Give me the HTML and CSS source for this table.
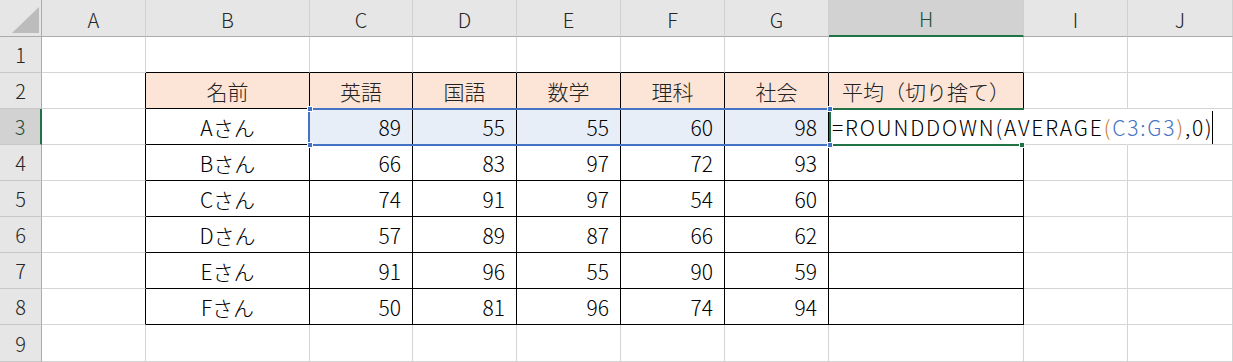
FILE: index.html
```html
<!DOCTYPE html>
<html lang="ja">
<head>
<meta charset="utf-8">
<title>Sheet</title>
<link rel="stylesheet" href="styles.css">
</head>
<body>
<div class="sheet">
  <div class="grid">
    <div class="corner"><svg width="42" height="37" viewBox="0 0 42 37"><polygon points="12,33 39,33 39,7" fill="#bcbcbc"/></svg></div>
    <div class="ch">A</div><div class="ch">B</div><div class="ch">C</div><div class="ch">D</div><div class="ch">E</div><div class="ch">F</div><div class="ch">G</div><div class="ch sel-h">H</div><div class="ch">I</div><div class="ch">J</div>

    <div class="rh">1</div>
    <div class="c"></div><div class="c above"></div><div class="c above"></div><div class="c above"></div><div class="c above"></div><div class="c above"></div><div class="c above"></div><div class="c above"></div><div class="c"></div><div class="c"></div>

    <div class="rh">2</div>
    <div class="c left"></div><div class="c t th">名前</div><div class="c t th">英語</div><div class="c t th">国語</div><div class="c t th">数学</div><div class="c t th">理科</div><div class="c t th">社会</div><div class="c t th">平均（切り捨て）</div><div class="c"></div><div class="c"></div>

    <div class="rh sel-r">3</div>
    <div class="c left"></div><div class="c t name">Aさん</div><div class="c t num hl">89</div><div class="c t num hl">55</div><div class="c t num hl">55</div><div class="c t num hl">60</div><div class="c t num hl">98</div><div class="c t edit"><span class="ftext">=ROUNDDOWN(AVERAGE<span class="paren">(</span><span class="ref">C3:G3</span><span class="paren">)</span>,0)</span></div><div class="c hide-r"></div><div class="c"></div>

    <div class="rh">4</div>
    <div class="c left"></div><div class="c t name">Bさん</div><div class="c t num">66</div><div class="c t num">83</div><div class="c t num">97</div><div class="c t num">72</div><div class="c t num">93</div><div class="c t"></div><div class="c"></div><div class="c"></div>

    <div class="rh">5</div>
    <div class="c left"></div><div class="c t name">Cさん</div><div class="c t num">74</div><div class="c t num">91</div><div class="c t num">97</div><div class="c t num">54</div><div class="c t num">60</div><div class="c t"></div><div class="c"></div><div class="c"></div>

    <div class="rh">6</div>
    <div class="c left"></div><div class="c t name">Dさん</div><div class="c t num">57</div><div class="c t num">89</div><div class="c t num">87</div><div class="c t num">66</div><div class="c t num">62</div><div class="c t"></div><div class="c"></div><div class="c"></div>

    <div class="rh">7</div>
    <div class="c left"></div><div class="c t name">Eさん</div><div class="c t num">91</div><div class="c t num">96</div><div class="c t num">55</div><div class="c t num">90</div><div class="c t num">59</div><div class="c t"></div><div class="c"></div><div class="c"></div>

    <div class="rh">8</div>
    <div class="c left"></div><div class="c t name">Fさん</div><div class="c t num">50</div><div class="c t num">81</div><div class="c t num">96</div><div class="c t num">74</div><div class="c t num">94</div><div class="c t"></div><div class="c"></div><div class="c"></div>

    <div class="rh">9</div>
    <div class="c"></div><div class="c"></div><div class="c"></div><div class="c"></div><div class="c"></div><div class="c"></div><div class="c"></div><div class="c"></div><div class="c"></div><div class="c"></div>
  </div>

  <div class="active-box"></div>
  <div class="fill-handle"></div>
  <div class="range-box">
    <span class="hd hd-tl"></span><span class="hd hd-tr"></span><span class="hd hd-bl"></span><span class="hd hd-br"></span>
  </div>
  <div class="caret"></div>
</div>
</body>
</html>
```

FILE: styles.css
```css
* { box-sizing: border-box; }
html, body { margin: 0; padding: 0; background: #fff; }
body { width: 1233px; height: 362px; overflow: hidden; }

.sheet {
  position: relative;
  width: 1233px;
  height: 362px;
  font-family: "Noto Sans CJK JP", "Noto Sans", sans-serif;
  font-weight: 300;
}

.grid {
  display: grid;
  grid-template-columns: 42px 104px 164px 103px 104px 104px 104px 104px 195px 104px 105px;
  grid-template-rows: 37px repeat(8, 36px) 37px;
}

.corner {
  background: #e6e6e6;
  border-right: 1px solid #ababab;
  border-bottom: 1px solid #ababab;
}
.corner svg { display: block; }

.ch {
  background: #e6e6e6;
  border-right: 1px solid #d0d0d0;
  border-bottom: 1px solid #ababab;
  display: flex;
  align-items: center;
  justify-content: center;
  font-size: 20px;
  color: #262626;
  padding-top: 2px;
}
.ch.sel-h {
  background: #d2d2d2;
  border-bottom: 2px solid #217346;
  color: #1f4e36;
}

.rh {
  background: #e6e6e6;
  border-right: 1px solid #ababab;
  border-bottom: 1px solid #c8c8c8;
  display: flex;
  align-items: center;
  justify-content: center;
  font-size: 20px;
  color: #262626;
}
.rh.sel-r {
  background: #d2d2d2;
  border-right: 2px solid #217346;
  color: #1f4e36;
}

.c {
  border-right: 1px solid #d4d4d4;
  border-bottom: 1px solid #d4d4d4;
  display: flex;
  align-items: center;
  font-size: 21px;
  color: #000;
  white-space: nowrap;
}
.c.above { border-bottom-color: #000; }
.c.left { border-right-color: #000; }
.c.t { border-right-color: #000; border-bottom-color: #000; }
.c.th { background: #fce4d6; justify-content: center; color: #222; }
.c.name { justify-content: center; }
.c.num { justify-content: flex-end; padding-right: 11px; }
.c.hl { background: #e8eef8; }

.c.edit {
  border-right-color: transparent;
  overflow: visible;
  padding-left: 3px;
  position: relative;
  z-index: 1;
}
.c.hide-r { border-right-color: transparent; }

.ftext { letter-spacing: 1.85px; }
.paren { color: #c8782e; }
.ref { color: #4472c4; }

.active-box {
  position: absolute;
  left: 829px;
  top: 108px;
  width: 195px;
  height: 38px;
  border-top: 2px solid #217346;
  border-bottom: 2px solid #217346;
  border-left: 2px solid #217346;
  z-index: 2;
}
.fill-handle {
  position: absolute;
  left: 1019px;
  top: 142px;
  width: 6px;
  height: 6px;
  background: #217346;
  border: 1px solid #fff;
  z-index: 3;
}

.range-box {
  position: absolute;
  left: 308px;
  top: 108px;
  width: 522px;
  height: 38px;
  border: 2px solid #4472c4;
  border-right: none;
  z-index: 4;
}
.hd {
  position: absolute;
  width: 6px;
  height: 6px;
  background: #4472c4;
  border: 1px solid #fff;
}
.hd-tl { left: -3px; top: -4px; }
.hd-bl { left: -3px; bottom: -4px; }
.hd-tr { right: -3px; top: -4px; }
.hd-br { right: -3px; bottom: -4px; }

.caret {
  position: absolute;
  left: 1212px;
  top: 111px;
  width: 1px;
  height: 33px;
  background: #000;
  z-index: 5;
}
```
